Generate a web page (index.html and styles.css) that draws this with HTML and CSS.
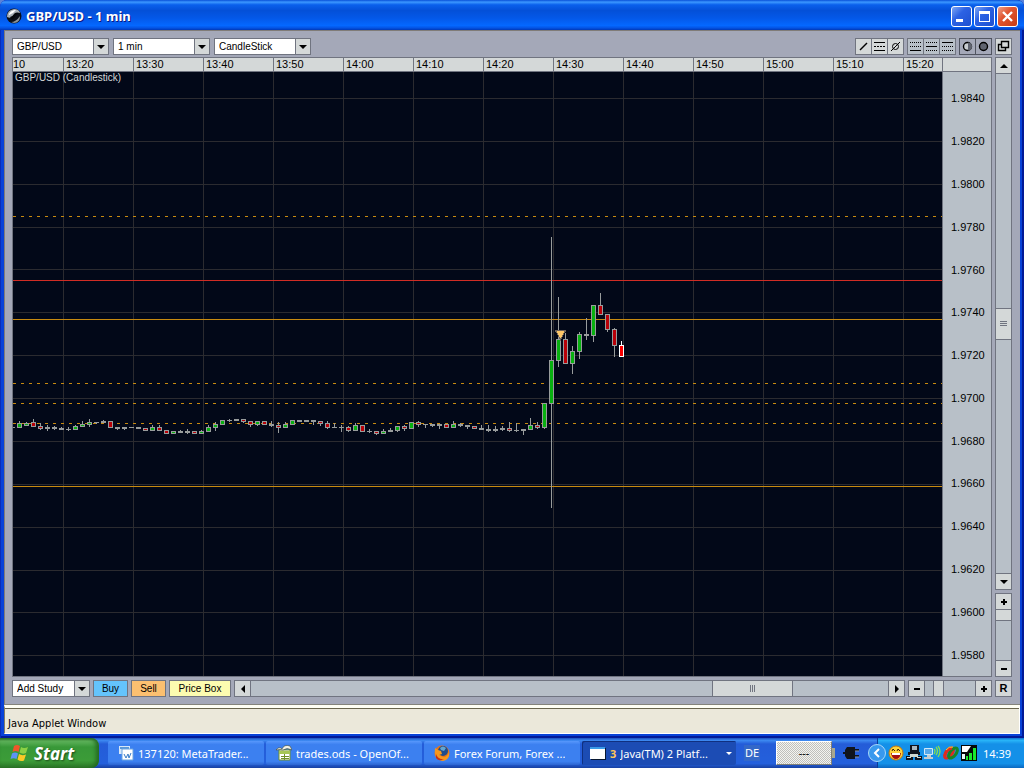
FILE: index.html
```html
<!DOCTYPE html>
<html lang="en">
  <head>
    <meta charset="UTF-8" />
    <meta name="viewport" content="width=device-width, initial-scale=1.0" />
    <title>GBP/USD - 1 min</title>
    <link rel="stylesheet" href="styles.css">
  </head>
  <body>
    <main class="window">
      <header class="titlebar">
        <svg class="app-icon" width="16" height="16" viewBox="0 0 16 16">
          <circle cx="8" cy="8" r="7.5" fill="#0a0e18" />
          <path d="M1 9Q1 2 8 1Q13 1 14 5Q9 4 7 8Q5 11 1 9Z" fill="#a8b0b8" />
          <path d="M3 6Q5 2 10 2Q8 5 3 7Z" fill="#fff" />
          <path d="M4 9Q7 8 9 5Q11 4 13 5Q9 7 8 10Q6 13 4 9Z" fill="#05070c" />
          <path d="M5 14Q10 14 14 8Q14 15 8 15Z" fill="#8a9298" />
        </svg>
        <h1>GBP/USD - 1 min</h1>
        <div class="win-buttons">
          <button class="win-btn" aria-label="Minimize"><svg width="19" height="19"><path d="M4 12h7v3H4z" fill="#fff" /></svg></button>
          <button class="win-btn" aria-label="Maximize"><svg width="19" height="19"><path d="M4 4h11v11H4zM5 7v7h9V7z" fill="#fff" fill-rule="evenodd" /></svg></button>
          <button class="win-btn close" aria-label="Close"><svg width="19" height="19"><path d="M5 5l9 9M14 5l-9 9" stroke="#fff" stroke-width="2.4" /></svg></button>
        </div>
      </header>

      <section class="applet">
        <div class="toolbar">
          <label class="combo"><select aria-label="Currency pair"><option>GBP/USD</option></select></label>
          <label class="combo"><select aria-label="Interval"><option>1 min</option></select></label>
          <label class="combo"><select aria-label="Chart type"><option>CandleStick</option></select></label>
          <div class="tool-groups">
            <div class="tools">
              <button aria-label="Trend line"><svg width="15" height="15"><path d="M4 11l7-7" stroke="#000" stroke-width="1.5" /></svg></button>
              <button aria-label="Horizontal lines"><svg width="15" height="15"><path d="M2 3.5h11M2 11.5h11" stroke="#000" /><path d="M2 7.5h11" stroke="#000" stroke-dasharray="2 1" /></svg></button>
              <button aria-label="Remove lines"><svg width="15" height="15"><circle cx="7.5" cy="7.5" r="3" fill="none" stroke="#000" /><path d="M3 12l9-9" stroke="#000" /></svg></button>
            </div>
            <div class="tools dim">
              <button aria-label="Line at bottom"><svg width="15" height="15"><path d="M2 3.5h11M2 7.5h11" stroke="#000" stroke-dasharray="1 1" /><path d="M2 11.5h11" stroke="#000" /></svg></button>
              <button aria-label="Line in middle"><svg width="15" height="15"><path d="M2 3.5h11M2 11.5h11" stroke="#000" stroke-dasharray="1 1" /><path d="M2 7.5h11" stroke="#000" /></svg></button>
              <button aria-label="Line at top"><svg width="15" height="15"><path d="M2 7.5h11M2 11.5h11" stroke="#000" stroke-dasharray="1 1" /><path d="M2 3.5h11" stroke="#000" /></svg></button>
            </div>
            <div class="tools pressed">
              <button aria-label="Half shade"><svg width="15" height="15"><circle cx="7.5" cy="7.5" r="4" fill="#c8ccd0" stroke="#000" stroke-width="1.4" /><path d="M8 3.500a4 4 0 0 1 0 8z" fill="#606470" /></svg></button>
              <button aria-label="Full shade"><svg width="15" height="15"><circle cx="7.5" cy="7.5" r="4" fill="#606470" stroke="#000" stroke-width="1.4" /></svg></button>
            </div>
            <div class="tools">
              <button aria-label="Detach window"><svg width="15" height="15"><path d="M5.500 2.500h7v6h-7zM5 5.500H2.500v6h7V9" fill="none" stroke="#000" stroke-width="1.4" /></svg></button>
            </div>
          </div>
        </div>

        <div class="chart-area">
          <div class="chart">
            <div class="time-axis">
              <span class="first">10</span><span>13:20</span><span>13:30</span><span>13:40</span><span>13:50</span><span>14:00</span><span>14:10</span><span>14:20</span><span>14:30</span><span>14:40</span><span>14:50</span><span>15:00</span><span>15:10</span><span>15:20</span>
            </div>
            <div class="axis-corner"></div>
            <div class="plot">
              <svg id="plot" width="100%" height="100%"></svg>
              <p class="series-name">GBP/USD (Candlestick)</p>
            </div>
            <div class="price-axis">
              <span>1.9840</span><span>1.9820</span><span>1.9800</span><span>1.9780</span><span>1.9760</span><span>1.9740</span><span>1.9720</span><span>1.9700</span><span>1.9680</span><span>1.9660</span><span>1.9640</span><span>1.9620</span><span>1.9600</span><span>1.9580</span>
            </div>
          </div>
          <div class="side">
            <div class="scroll vertical">
              <button aria-label="Scroll up"><i class="arrow up"></i></button>
              <div class="track"><div class="thumb"><i class="grip"></i></div></div>
              <button aria-label="Scroll down"><i class="arrow down"></i></button>
            </div>
            <div class="zoom vertical">
              <button aria-label="Zoom in price"><i class="sign plus"></i></button>
              <input type="range" min="0" max="100" value="0" aria-label="Price zoom">
              <button aria-label="Zoom out price"><i class="sign"></i></button>
            </div>
          </div>
        </div>

        <div class="bottom-bar">
          <label class="combo study"><select aria-label="Add study"><option>Add Study</option></select></label>
          <button class="order buy">Buy</button>
          <button class="order sell">Sell</button>
          <button class="order price-box">Price Box</button>
          <div class="scroll horizontal">
            <button aria-label="Scroll left"><i class="arrow left"></i></button>
            <div class="track"><div class="thumb"><i class="grip"></i></div></div>
            <button aria-label="Scroll right"><i class="arrow right"></i></button>
          </div>
          <div class="zoom horizontal">
            <button aria-label="Zoom out time"><i class="sign"></i></button>
            <input type="range" min="0" max="100" value="23" aria-label="Time zoom">
            <button aria-label="Zoom in time"><i class="sign plus"></i></button>
          </div>
          <button class="reset">R</button>
        </div>
      </section>

      <footer class="status">Java Applet Window</footer>
    </main>

    <nav class="taskbar">
      <button class="start">
        <svg width="20" height="18" viewBox="0 0 20 18">
          <path d="M4 2Q7 0 10 2L8.500 8Q5.500 6 2.500 8Z" fill="#f0562a" />
          <path d="M11 3Q14 5 18 3L16 9Q12.500 10.500 9.500 8.500Z" fill="#8bd045" />
          <path d="M2 9.500Q5 7.500 8 9.500L6.500 15Q3.500 13.500 0.500 15Z" fill="#5d93f5" />
          <path d="M9 10Q12 12 16 10.500L14 16.500Q10.500 18 7.500 15.500Z" fill="#fbc927" />
        </svg>
        Start
      </button>
      <div class="tasks">
        <button class="task">
          <svg width="16" height="16"><path d="M1 1h11v8H1z" fill="#d8e8f8" /><path d="M2 2h9v2H2z" fill="#5a98d8" /><path d="M4 4h11v11H4z" fill="#fff" stroke="#6aa4e0" /><path d="M6 9l2 4 2-4 1 4 2-5" fill="none" stroke="#387cc8" /></svg>
          <span>137120: MetaTrader...</span>
        </button>
        <button class="task">
          <svg width="16" height="16"><path d="M3 5h11v10H3z" fill="#fff" stroke="#71912b" /><path d="M3 6h11v3H3z" fill="#a6c657" /><path d="M5 11.500h8M5 13.500h8M8.500 9v6" stroke="#71912b" /><path d="M0 5q3-4 6-1 2-5 8-3l2 4q-5-3-9 0-3-1-7 0z" fill="#f2f2e6" stroke="#424830" stroke-width=".6" /></svg>
          <span>trades.ods - OpenOf...</span>
        </button>
        <button class="task">
          <svg width="16" height="16"><circle cx="8" cy="8" r="7.500" fill="#e87516" /><circle cx="9" cy="6" r="5" fill="#1e4b8c" /><path d="M6 3q3-3 6 0l-2 3-3-1z" fill="#62a6d2" /><path d="M1 3l3 2 3 1 1 3-3 1 4 2q4 1 6-5 1 8-6 9Q0 15 1 3z" fill="#f7981d" /><path d="M2 9q2 6 8 5-5 3-8-1z" fill="#c53318" /></svg>
          <span>Forex Forum, Forex ...</span>
        </button>
        <button class="task active">
          <svg width="16" height="16"><path d="M1 3h15v12H1z" fill="#081830" /><path d="M0 2h15v12H0z" fill="#fff" /><path d="M0 2h15v2H0z" fill="#3a9be8" /></svg>
          <b>3</b><span>Java(TM) 2 Platf...</span><i class="more"></i>
        </button>
      </div>
      <span class="lang">DE</span>
      <span class="battery">---</span>
      <svg class="plug" width="17" height="14"><path d="M0 6h3v2H0zM2 4l2-3h8v2h4v2h-4v4h4v2h-4v2H4l-2-3z" fill="#10141c" /><path d="M12 5h4M12 11h4" stroke="#8890a0" /></svg>
      <div class="tray">
        <button class="chevron" aria-label="Show hidden icons"><svg width="18" height="18"><circle cx="9" cy="9" r="8.500" fill="#3899ee" stroke="#a8d8f8" /><path d="M11 5L7 9l4 4" fill="none" stroke="#fff" stroke-width="2" /></svg></button>
        <svg width="16" height="16"><circle cx="8" cy="8" r="7" fill="#ffd43a" stroke="#c67608" /><path d="M3 8h10q-1 6-5 6T3 8z" fill="#a81010" /><path d="M4 8h8v2H4z" fill="#fff" /><path d="M4 6l1-2 2 2M9 6l1-2 2 2" fill="none" stroke="#402000" /></svg>
        <svg width="16" height="16"><path d="M4 0h9v7H4z" fill="#10141c" /><path d="M6 1h5v4H6z" fill="#a8b8c0" /><path d="M2 7h12v3H2zM0 11h7v4H0zM9 11h7v4H9z" fill="#10141c" /><path d="M4 9h8v3H4zM1 12h4v1H1zM11 12h4v1h-4z" fill="#d0d8d0" /></svg>
        <svg width="17" height="16"><path d="M.5 3.500h8v6h-8z" fill="#58a8e8" stroke="#d0e8f8" /><path d="M3 10h4v2H3zM0 12h9v2H0z" fill="#c4ccd0" /><path d="M10 4q2 2 0 5M12 2q3 4 0 8M14 1q4 5 0 11" fill="none" stroke="#86e04e" stroke-width="1.3" /></svg>
        <svg width="16" height="16"><g fill="none" stroke-width="3"><ellipse cx="6" cy="8" rx="3" ry="6" transform="rotate(38 6 8)" stroke="#e02b20" /><ellipse cx="10" cy="8" rx="3" ry="6" transform="rotate(38 10 8)" stroke="#188528" /><path d="M2 11Q3 4 9 3" stroke="#e02b20" /></g><path d="M3 5q3-4 7-3" fill="none" stroke="#f6d033" /></svg>
        <svg width="16" height="16"><path d="M0 0h16v16H0z" fill="#050808" /><path d="M1 1h9L6 7H1z" fill="#fff" /><path d="M1 9h3v5H1z" fill="#e8f8f8" /><path d="M5 11h2v4H5zM8 8h3v7H8zM12 3h3v12h-3z" fill="#19e72e" /></svg>
        <time>14:39</time>
      </div>
    </nav>

    <script>
      // time between two candles, in pixels
      const STEP = 7;
      const FIRST_X = -1;
      // y values are measured from the top of the window
      const TOP = 72;

      // [high, body top, body bottom, low, colour]
      const candles = [
        [427, 427, 428, 428, "n"], [421, 423, 428, 428, "g"], [422, 423, 426, 426, "g"], [419, 422, 427, 427, "r"],
        [423, 426, 429, 430, "r"], [425, 427, 429, 431, "n"], [426, 427, 429, 430, "n"], [427, 428, 430, 430, "n"],
        [427, 429, 430, 431, "n"], [425, 426, 430, 430, "g"], [421, 424, 427, 427, "g"], [419, 422, 425, 427, "g"],
        [422, 422, 423, 424, "n"], [420, 421, 423, 423, "n"], [421, 421, 428, 428, "r"], [427, 427, 429, 430, "n"],
        [427, 427, 429, 430, "n"], [427, 427, 428, 428, "n"], [427, 427, 429, 429, "n"], [428, 428, 431, 431, "r"],
        [425, 427, 431, 431, "g"], [425, 427, 431, 431, "r"], [430, 430, 434, 434, "r"], [431, 431, 434, 434, "g"],
        [430, 431, 433, 433, "n"], [429, 431, 433, 434, "n"], [431, 431, 434, 434, "r"], [430, 431, 434, 434, "g"],
        [425, 427, 432, 432, "g"], [422, 424, 428, 431, "g"], [420, 420, 425, 425, "g"], [419, 420, 421, 422, "n"],
        [419, 419, 421, 421, "n"], [419, 419, 422, 423, "r"], [421, 421, 425, 427, "r"], [421, 421, 425, 426, "g"],
        [421, 421, 425, 425, "r"], [421, 424, 426, 427, "n"], [422, 425, 428, 433, "r"], [422, 424, 428, 428, "g"],
        [420, 420, 425, 425, "g"], [420, 420, 422, 422, "n"], [420, 420, 422, 422, "n"], [420, 420, 422, 425, "n"],
        [421, 421, 424, 426, "r"], [421, 423, 428, 429, "r"], [423, 427, 428, 428, "n"], [425, 427, 428, 432, "n"],
        [426, 427, 431, 432, "r"], [423, 425, 431, 431, "g"], [425, 425, 432, 432, "r"], [429, 431, 432, 433, "n"],
        [431, 431, 434, 435, "r"], [429, 431, 434, 434, "g"], [428, 430, 432, 432, "n"], [426, 426, 431, 432, "g"],
        [425, 426, 429, 431, "r"], [422, 422, 429, 429, "g"], [421, 422, 425, 427, "r"], [424, 424, 425, 428, "n"],
        [424, 424, 426, 427, "n"], [424, 424, 426, 429, "n"], [424, 424, 428, 428, "r"], [421, 424, 428, 428, "g"],
        [423, 424, 426, 427, "n"], [425, 425, 427, 429, "n"], [426, 426, 429, 429, "r"], [425, 428, 430, 430, "n"],
        [425, 429, 431, 432, "n"], [426, 429, 431, 432, "n"], [426, 428, 430, 431, "n"], [422, 428, 431, 432, "r"],
        [423, 430, 431, 432, "n"], [429, 429, 431, 435, "n"], [418, 425, 430, 430, "g"], [422, 425, 428, 429, "r"],
        [403, 403, 428, 429, "g"], [237, 360, 404, 508, "g"], [297, 339, 361, 367, "g"], [333, 339, 364, 364, "r"],
        [346, 351, 364, 374, "g"], [332, 334, 352, 359, "g"], [318, 334, 336, 340, "n"], [305, 305, 336, 342, "g"],
        [293, 305, 315, 315, "r"], [314, 314, 330, 332, "r"], [328, 329, 346, 357, "r"], [341, 345, 357, 357, "live"]
      ];

      // [y, class]
      const levels = [
        [216, "level dashed"], [280, "level stop"], [319, "level"],
        [383, "level dashed"], [403, "level dashed"], [423, "level dashed"], [486, "level"]
      ];

      function rect(x, y, w, h, cls) {
        return `<rect x="${x}" y="${y - TOP}" width="${w}" height="${h}" class="${cls}" />`;
      }

      function drawPlot() {
        let out = "";
        for (let i = 0; i < 40; i++) {
          out += `<line x1="${50.5 + i * 70}" x2="${50.5 + i * 70}" y1="0" y2="100%" class="grid" />`;
        }
        for (let i = 0; i < 14; i++) {
          let y = Math.round(26 + i * 42.87) + 0.5;
          out += `<line x1="0" x2="100%" y1="${y}" y2="${y}" class="grid" />`;
        }
        for (let [y, cls] of levels) {
          out += `<line x1="0" x2="100%" y1="${y - TOP + 0.5}" y2="${y - TOP + 0.5}" class="${cls}" />`;
        }
        candles.forEach(([high, top, bottom, low, color], i) => {
          let x = FIRST_X + i * STEP;
          let edge = color === "live" ? "edge-live" : "edge";
          out += rect(x, high, 1, low - high, edge);
          out += rect(x - 2, top, 5, bottom - top, edge);
          if (color !== "n") {
            out += rect(x - 1, top + 1, 3, bottom - top - 2, color);
          }
        });
        // trade marker
        out += `<path d="M542.5 258.500h10l-5 9z" class="marker" />`;
        document.getElementById("plot").innerHTML = out;
      }

      drawPlot();
    </script>
  </body>
</html>
```

FILE: styles.css
```css
* {
  box-sizing: border-box;
}
body {
  margin: 0;
  min-height: 100vh;
  display: flex;
  flex-direction: column;
  background: #5a82d8;
  font-family: "Liberation Sans", Arial, sans-serif;
  font-size: 11px;
  color: #000;
}
button,
select,
input {
  margin: 0;
  padding: 0;
  border: none;
  border-radius: 0;
  font: inherit;
  color: inherit;
}
svg {
  display: block;
  flex: none;
}

/* window frame */
.window {
  flex: 1;
  display: flex;
  flex-direction: column;
  padding: 0 4px 4px;
  background: #0842d8;
  border-radius: 7px 7px 0 0;
  box-shadow: inset 1px 0 #0a2cb8, inset -2px 0 #021a98, inset 0 -2px #021a98;
}
.titlebar {
  height: 30px;
  margin: 0 -4px;
  padding: 2px 6px 0 6px;
  display: flex;
  align-items: center;
  gap: 4px;
  border-radius: 7px 7px 0 0;
  background: linear-gradient(#0850d8 0, #3c98ff 7%, #0a60ec 16%, #0450d8 35%, #0458e8 60%, #0468ff 85%, #0454e4 93%, #0038b8 100%);
}
.titlebar h1 {
  flex: 1;
  margin: 0;
  font-family: "Noto Sans", sans-serif;
  font-size: 13px;
  line-height: 16px;
  font-weight: bold;
  color: #fff;
  text-shadow: 1px 1px #0a1883;
}
.win-buttons {
  display: flex;
  gap: 2px;
}
.win-btn {
  width: 21px;
  height: 21px;
  border: 1px solid #fff;
  border-radius: 3px;
  background: linear-gradient(135deg, #7ea6f4, #2c62e4 40%, #1e50d0);
}
.win-btn.close {
  background: linear-gradient(135deg, #f0a088, #e05530 40%, #c83c14);
}

/* applet */
.applet {
  flex: 1;
  display: flex;
  flex-direction: column;
  padding: 7px 8px 8px 7px;
  background: #a4a8b8;
  border-top: 1px solid #807c78;
  border-left: 1px solid #807c78;
}
.toolbar {
  display: flex;
  gap: 4px;
  margin-bottom: 2px;
}
.combo {
  position: relative;
  width: 97px;
  height: 17px;
}
.combo select {
  appearance: none;
  display: block;
  width: 100%;
  height: 17px;
  padding-left: 4px;
  border: 1px solid #707480;
  background: linear-gradient(to left, #d4d8d8 14px, #707480 14px, #707480 15px, #fff 15px);
  font-size: 10px;
}
.combo::after {
  content: "";
  position: absolute;
  right: 4px;
  top: 7px;
  border: 4px solid transparent;
  border-top-color: #000;
  border-bottom: none;
  pointer-events: none;
}
.tool-groups {
  margin-left: auto;
  display: flex;
  gap: 3px;
}
.tools {
  display: flex;
  gap: 1px;
  padding: 1px;
  background: #707480;
}
.tools button {
  width: 15px;
  height: 15px;
  background: #d4d8d8;
}
.tools.dim button {
  background: #b8c0c8;
}
.tools.pressed {
  background: #505460;
}
.tools.pressed button {
  background: #a4a8b8;
}

/* chart */
.chart-area {
  flex: 1;
  display: flex;
  gap: 3px;
  margin-bottom: 3px;
}
.chart {
  flex: 1;
  min-width: 0;
  display: grid;
  grid-template-columns: minmax(0, 1fr) 49px;
  grid-template-rows: 14px 1fr;
  border: 1px solid #707480;
}
.time-axis {
  display: flex;
  overflow: hidden;
  background: #d4d8d8;
  border-bottom: 1px solid #707480;
  line-height: 13px;
}
.time-axis span {
  flex: 0 0 70px;
  padding-left: 2px;
  border-left: 1px solid #707480;
}
.time-axis .first {
  flex-basis: 50px;
  padding-left: 0;
  border-left: none;
}
.axis-corner {
  background: #d4d8d8;
  border-left: 1px solid #707480;
  border-bottom: 1px solid #707480;
}
.plot {
  position: relative;
  background: #020818;
  overflow: hidden;
}
.plot svg {
  position: absolute;
  inset: 0;
  shape-rendering: crispEdges;
}
.series-name {
  position: relative;
  margin: 0;
  padding-left: 2px;
  font-size: 10px;
  line-height: 12px;
  color: #d4d8d8;
}
.price-axis {
  display: flex;
  flex-direction: column;
  padding-top: 5px;
  background: #b8c0c8;
  border-left: 1px solid #707480;
}
.price-axis span {
  flex: 1 1 0;
  display: flex;
  align-items: center;
  padding-left: 8px;
}
.grid {
  stroke: #2b2b30;
}
.level {
  stroke: #c88a10;
}
.level.dashed {
  stroke-dasharray: 3 5;
}
.level.stop {
  stroke: #d02c24;
}
.edge {
  fill: #989c9c;
}
.edge-live {
  fill: #fff;
}
.g {
  fill: #08b010;
}
.r {
  fill: #b80008;
}
.live {
  fill: #f80000;
}
.marker {
  fill: #ffc868;
  stroke: #706458;
}

/* scrollbars and zoom sliders */
.side {
  width: 17px;
  display: flex;
  flex-direction: column;
  gap: 3px;
}
.scroll,
.zoom {
  display: flex;
  border: 1px solid #707480;
  background: #b8c0c8;
}
.scroll.vertical,
.zoom.vertical {
  flex-direction: column;
}
.scroll.vertical,
.scroll.horizontal {
  flex: 1;
}
.scroll button,
.zoom button {
  flex: none;
  width: 15px;
  height: 15px;
  display: flex;
  align-items: center;
  justify-content: center;
  background: #d4d8d8;
  box-shadow: 0 0 0 1px #707480;
}
.track {
  flex: 1;
  display: flex;
}
.vertical .track {
  flex-direction: column;
}
.track::before,
.track::after {
  content: "";
  flex: 1;
}
.horizontal .track::before {
  flex-grow: 4.8;
}
.thumb {
  display: flex;
  align-items: center;
  justify-content: center;
  background: #d4d8d8;
  box-shadow: 0 0 0 1px #707480;
}
.vertical .thumb {
  height: 30px;
}
.horizontal .thumb {
  width: 79px;
}
.grip {
  width: 5px;
  height: 7px;
  background: repeating-linear-gradient(to right, #707480 0 1px, transparent 1px 2px);
}
.vertical .grip {
  width: 7px;
  height: 5px;
  background: repeating-linear-gradient(#707480 0 1px, transparent 1px 2px);
}
.arrow {
  border: 4px solid transparent;
}
.arrow.up {
  border-bottom-color: #000;
  border-top: none;
}
.arrow.down {
  border-top-color: #000;
  border-bottom: none;
}
.arrow.left {
  border-right-color: #000;
  border-left: none;
}
.arrow.right {
  border-left-color: #000;
  border-right: none;
}
.sign {
  width: 6px;
  height: 6px;
  background: linear-gradient(#000, #000) center / 6px 2px no-repeat;
}
.sign.plus {
  background: linear-gradient(#000, #000) center / 6px 2px no-repeat, linear-gradient(#000, #000) center / 2px 6px no-repeat;
}
.zoom.vertical {
  height: 84px;
}
.zoom.horizontal {
  width: 84px;
}
.zoom input {
  appearance: none;
  flex: 1;
  min-width: 0;
  min-height: 0;
  width: 15px;
  height: 15px;
  background: transparent;
}
.zoom.vertical input {
  writing-mode: vertical-lr;
}
.zoom input::-webkit-slider-thumb {
  appearance: none;
  width: 11px;
  height: 15px;
  background: #d4d8d8;
  border: solid #707480;
  border-width: 0 1px;
}
.zoom.vertical input::-webkit-slider-thumb {
  width: 15px;
  height: 12px;
  border-width: 1px 0;
}

/* bottom bar */
.bottom-bar {
  display: flex;
  gap: 3px;
  height: 17px;
}
.combo.study {
  width: 78px;
}
.order,
.reset {
  border: 1px solid #707480;
  font-size: 10px;
  line-height: 15px;
}
.order {
  width: 35px;
}
.buy {
  background: #64c4fc;
}
.sell {
  background: #fcc070;
}
.order.price-box {
  width: 62px;
  background: #fcfcb0;
}
.reset {
  width: 17px;
  background: #d4d8d8;
  font-size: 11px;
  font-weight: bold;
}

/* status line */
.status {
  height: 29px;
  padding: 9px 3px 0;
  border: 1px solid #fff;
  border-top: 3px solid #fffff4;
  border-left-color: #807c68;
  background: #ebe8da;
  box-shadow: inset 0 1px #68644c, 0 -1px #84847c;
  font-family: "DejaVu Sans Condensed", "DejaVu Sans", sans-serif;
  line-height: 14px;
}

/* taskbar */
.taskbar {
  height: 30px;
  display: flex;
  align-items: center;
  background: linear-gradient(#1c50c0 0, #3c88f0 8%, #245cd8 20%, #2460dc 85%, #1840a0 100%);
  font-family: "Noto Sans", sans-serif;
  color: #fff;
}
.start {
  align-self: stretch;
  width: 99px;
  padding-left: 10px;
  display: flex;
  align-items: center;
  gap: 4px;
  border-radius: 0 8px 8px 0;
  background: linear-gradient(#2c6c28 0, #60b45c 10%, #389838 30%, #3c9c38 75%, #2c7828 100%);
  box-shadow: inset -3px 0 4px #246820;
  font-size: 17px;
  font-weight: bold;
  font-style: italic;
  text-shadow: 1px 1px 2px #1c4818;
}
.tasks {
  flex: 1;
  min-width: 0;
  display: flex;
  gap: 2px;
  margin-left: 9px;
}
.task {
  flex: 1 1 0;
  min-width: 0;
  height: 24px;
  display: flex;
  align-items: center;
  gap: 4px;
  padding-left: 10px;
  border-radius: 2px;
  background: linear-gradient(#5898fc 0, #3c80f0 15%, #3c80f0 85%, #2c64d0 100%);
  white-space: nowrap;
}
.task span {
  overflow: hidden;
}
.task.active {
  padding-left: 8px;
  background: #1c4cb4;
  box-shadow: inset 1px 1px #103080;
}
.task b {
  color: #ffc858;
}
.more {
  margin: 0 4px 0 auto;
  border: 3px solid transparent;
  border-top-color: #fff;
  border-bottom: none;
}
.lang {
  width: 16px;
  margin-left: 8px;
  background: #3468c8;
  line-height: 16px;
  text-align: center;
}
.battery {
  width: 56px;
  height: 24px;
  margin-left: 16px;
  border: 1px solid #fff;
  border-right-color: #808078;
  border-bottom-color: #808078;
  background: repeating-conic-gradient(#c0c0bc 0 25%, #f4f4f0 0 50%) 0 0 / 2px 2px;
  line-height: 22px;
  text-align: center;
  color: #000;
}
.battery::after {
  content: "";
  float: right;
  width: 3px;
  height: 10px;
  margin: 6px -4px 0 0;
  background: #a8a890;
}
.plug {
  margin-left: 11px;
}
.tray {
  width: 147px;
  height: 30px;
  margin-left: 17px;
  display: flex;
  align-items: center;
  gap: 2px;
  border-left: 1px solid #0c3c98;
  background: linear-gradient(#1070d0 0, #28b4f8 8%, #1490e8 20%, #1490e8 85%, #0c68c0 100%);
}
.chevron {
  margin-left: -10px;
  background: none;
}
.tray time {
  margin-left: 4px;
}
```
